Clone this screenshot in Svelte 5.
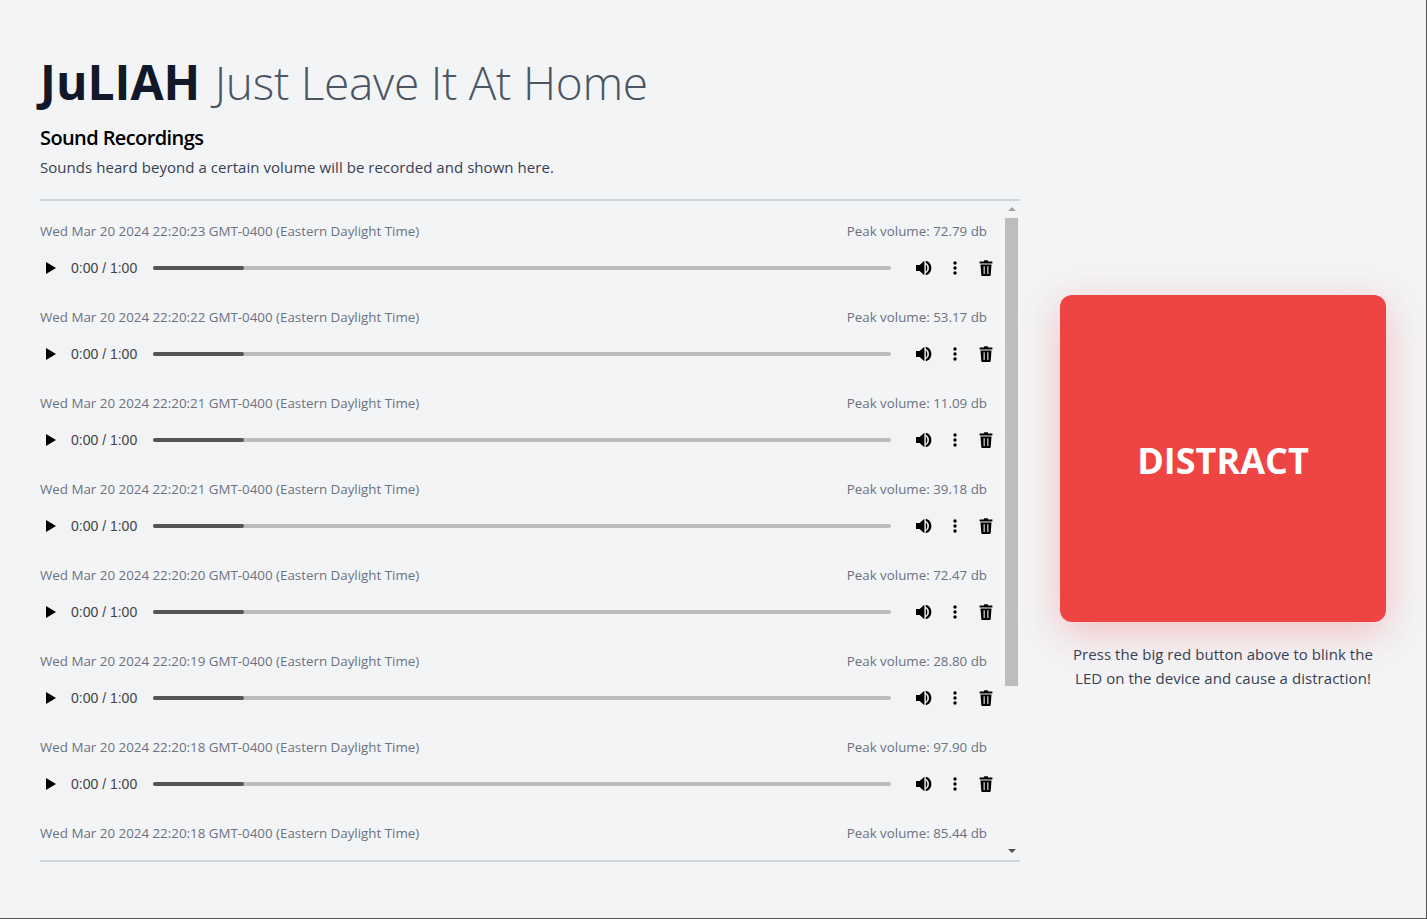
<script>
	const recordings = [
		{ date: 'Wed Mar 20 2024 22:20:23 GMT-0400 (Eastern Daylight Time)', peak: '72.79' },
		{ date: 'Wed Mar 20 2024 22:20:22 GMT-0400 (Eastern Daylight Time)', peak: '53.17' },
		{ date: 'Wed Mar 20 2024 22:20:21 GMT-0400 (Eastern Daylight Time)', peak: '11.09' },
		{ date: 'Wed Mar 20 2024 22:20:21 GMT-0400 (Eastern Daylight Time)', peak: '39.18' },
		{ date: 'Wed Mar 20 2024 22:20:20 GMT-0400 (Eastern Daylight Time)', peak: '72.47' },
		{ date: 'Wed Mar 20 2024 22:20:19 GMT-0400 (Eastern Daylight Time)', peak: '28.80' },
		{ date: 'Wed Mar 20 2024 22:20:18 GMT-0400 (Eastern Daylight Time)', peak: '97.90' },
		{ date: 'Wed Mar 20 2024 22:20:18 GMT-0400 (Eastern Daylight Time)', peak: '85.44' }
	];
</script>

<div class="page">
	<main class="left">
		<h1><b>JuLIAH</b> <span>Just Leave It At Home</span></h1>
		<h2>Sound Recordings</h2>
		<p class="intro">Sounds heard beyond a certain volume will be recorded and shown here.</p>

		<div class="list">
			<div class="items">
				{#each recordings as rec, i}
					<div class="item">
						<div class="meta">
							<span>{rec.date}</span>
							<span>Peak volume: {rec.peak} db</span>
						</div>
						<div class="player">
							<!-- last row is scrolled out of view, only the panel top shows -->
							{#if i < recordings.length - 1}
								<svg class="play" viewBox="0 0 10 12" width="10" height="12"><path d="M0 0 L10 6 L0 12 Z" /></svg>
								<span class="time">0:00 / 1:00</span>
								<div class="track"><div class="progress"></div></div>
								<svg class="vol" viewBox="0 0 18 18" width="18" height="18">
									<path d="M1 6 H4.6 L9.4 1.8 V16.2 L4.6 12 H1 Z" />
									<path d="M10.8 5.4 C12.8 6.4 12.8 11.6 10.8 12.6 Z" />
									<path d="M10.8 1.8 C18.2 3.2 18.2 14.8 10.8 16.2 V14 C15 12.8 15 5.2 10.8 4 Z" />
								</svg>
								<svg class="dots" viewBox="0 0 4 14" width="4" height="14">
									<circle cx="2" cy="2" r="1.7" /><circle cx="2" cy="7" r="1.7" /><circle cx="2" cy="12" r="1.7" />
								</svg>
								<svg class="trash" viewBox="0 0 14 16" width="14" height="16">
									<path d="M4.6 1.6 L5.4 0.3 H8.6 L9.4 1.6 H13.4 V3.4 H0.6 V1.6 Z" />
									<path fill-rule="evenodd" d="M1.5 4.4 H12.5 L11.7 15 Q11.6 16 10.6 16 H3.4 Q2.4 16 2.3 15 Z M4.6 6.2 V14 H5.7 V6.2 Z M8.3 6.2 V14 H9.4 V6.2 Z" />
								</svg>
							{/if}
						</div>
					</div>
				{/each}
			</div>
			<div class="scrollbar">
				<div class="arrow up"></div>
				<div class="thumb"></div>
				<div class="arrow down"></div>
			</div>
		</div>
	</main>

	<aside class="right">
		<button class="distract">DISTRACT</button>
		<p class="note">Press the big red button above to blink the LED on the device and cause a distraction!</p>
	</aside>
</div>

<style>
	:global(body) {
		margin: 0;
		background: #f3f4f6;
	}
	.page {
		box-sizing: border-box;
		height: 919px;
		display: flex;
		align-items: flex-start;
		gap: 40px;
		padding: 58px 40px 0;
		overflow: hidden;
		border-right: 1px solid #555;
		border-bottom: 1px solid #555;
		font-family: "Open Sans", "Noto Sans", sans-serif;
		color: #374151;
	}
	.left {
		width: 980px;
		flex: none;
	}
	h1 {
		margin: 0;
		font-size: 48px;
		line-height: 48px;
		font-weight: 300;
		white-space: nowrap;
		color: #4b5563;
	}
	h1 b {
		font-weight: 700;
		color: #111827;
	}
	h1 span {
		margin-left: 2px;
		font-size: 46px;
		letter-spacing: -0.27px;
	}
	h2 {
		margin: 18px 0 0;
		font-size: 20px;
		line-height: 28px;
		font-weight: 600;
		color: #000;
		letter-spacing: -0.6px;
	}
	.intro {
		margin: 3px 0 0;
		font-size: 15px;
		line-height: 24px;
		letter-spacing: 0.05px;
	}
	.list {
		display: flex;
		height: 659px;
		margin-top: 20px;
		border-top: 2px solid #d1d5db;
		border-bottom: 2px solid #d1d5db;
	}
	.items {
		flex: 1;
		overflow: hidden;
	}
	.item {
		height: 86px;
	}
	.meta {
		display: flex;
		justify-content: space-between;
		height: 40px;
		padding: 20px 16px 0 0;
		box-sizing: border-box;
		font-size: 13.35px;
		line-height: 20px;
		color: #6b7280;
	}
	.player {
		display: flex;
		align-items: center;
		height: 54px;
		background: #f1f3f4;
		border-radius: 27px;
		padding: 0 10px 0 6px;
		box-sizing: border-box;
	}
	.play {
		flex: none;
		fill: #000;
	}
	.time {
		margin-left: 15px;
		font-family: "Liberation Sans", Arial, sans-serif;
		font-size: 14px;
		color: #444;
		white-space: nowrap;
	}
	.track {
		flex: 1;
		height: 4px;
		margin: 0 24px 0 16px;
		background: #bcbcbc;
		border-radius: 2px;
	}
	.progress {
		width: 91px;
		height: 4px;
		background: #555;
		border-radius: 2px;
	}
	.vol,
	.dots,
	.trash {
		flex: none;
		fill: #000;
	}
	.dots {
		margin-left: 20px;
	}
	.trash {
		margin-left: 22px;
	}
	.scrollbar {
		width: 17px;
		flex: none;
		display: flex;
		flex-direction: column;
		align-items: center;
		background: #f3f4f6;
	}
	.thumb {
		width: 13px;
		height: 468px;
		background: #bdbdbd;
	}
	.arrow {
		width: 0;
		height: 0;
		border-left: 4px solid transparent;
		border-right: 4px solid transparent;
	}
	.arrow.up {
		margin: 6px 0 7px;
		border-bottom: 4px solid #a3a3a3;
	}
	.arrow.down {
		margin-top: auto;
		margin-bottom: 7px;
		border-top: 4px solid #505050;
	}
	.right {
		width: 326px;
		flex: none;
		padding-top: 237px;
		text-align: center;
	}
	.distract {
		display: block;
		width: 326px;
		height: 327px;
		padding-top: 5px;
		border: none;
		border-radius: 12px;
		background: #ef4444;
		color: #fff;
		font-family: inherit;
		font-size: 36px;
		font-weight: 700;
		box-shadow: 0 10px 40px rgba(239, 68, 68, 0.3);
	}
	.note {
		margin: 20px 0 0;
		font-size: 15px;
		line-height: 24px;
		letter-spacing: 0.05px;
	}
</style>
